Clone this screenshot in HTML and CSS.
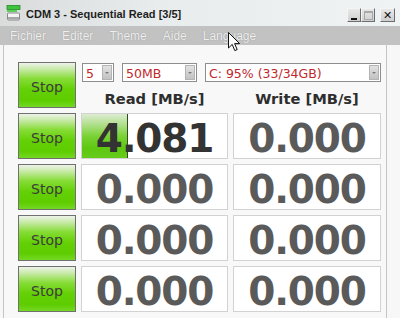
FILE: index.html
```html
<!DOCTYPE html>
<html>
<head>
<meta charset="utf-8">
<link rel="stylesheet" href="styles.css">
</head>
<body>
<div class="window">
  <div class="titlebar">
    <svg class="app-icon" width="16" height="16" viewBox="0 0 16 16">
      <rect x="1" y="0.5" width="13" height="4" fill="#3fc43f" stroke="#2a8a2a" stroke-width="0.8"/>
      <rect x="1" y="5" width="10" height="2" fill="#5ad05a"/>
      <rect x="1.5" y="8" width="12" height="7" rx="1" fill="#f4f4f4" stroke="#8a8a8a"/>
      <rect x="2" y="12" width="11" height="2.5" fill="#a8a8a8"/>
    </svg>
    <span class="title">CDM 3 - Sequential Read [3/5]</span>
    <div class="controls">
      <span class="ctl ctl-min"><i class="min-glyph"></i></span>
      <span class="ctl ctl-max"><i class="max-glyph"></i></span>
      <span class="ctl ctl-close">✕</span>
    </div>
  </div>
  <div class="menubar">
    <span class="menu-item">Fichier</span>
    <span class="menu-item">Editer</span>
    <span class="menu-item">Theme</span>
    <span class="menu-item">Aide</span>
    <span class="menu-item">Language</span>
  </div>
  <div class="content">
    <div class="grid">
      <div class="stop">Stop</div>
      <div class="top-area">
        <div class="selects">
          <div class="select sel-count"><span class="sel-text">5</span><i class="sel-arrow"></i></div>
          <div class="select sel-size"><span class="sel-text">50MB</span><i class="sel-arrow"></i></div>
          <div class="select sel-drive"><span class="sel-text">C: 95% (33/34GB)</span><i class="sel-arrow"></i></div>
        </div>
        <div class="headers">
          <div class="head">Read [MB/s]</div>
          <div class="head">Write [MB/s]</div>
        </div>
      </div>

      <div class="stop">Stop</div>
      <div class="cell"><div class="bar" style="width:46px"></div><span class="val val-dark">4.081</span></div>
      <div class="cell"><span class="val">0.000</span></div>

      <div class="stop">Stop</div>
      <div class="cell"><span class="val">0.000</span></div>
      <div class="cell"><span class="val">0.000</span></div>

      <div class="stop">Stop</div>
      <div class="cell"><span class="val">0.000</span></div>
      <div class="cell"><span class="val">0.000</span></div>

      <div class="stop">Stop</div>
      <div class="cell"><span class="val">0.000</span></div>
      <div class="cell"><span class="val">0.000</span></div>
    </div>
  </div>
  <svg class="cursor" width="13" height="21" viewBox="0 0 13 21">
    <path d="M0.5 0.5 L0.5 16 L4.2 12.4 L6.8 18.6 L9.2 17.6 L6.6 11.6 L11.6 11.6 Z" fill="#ffffff" stroke="#111111" stroke-width="1" stroke-linejoin="miter"/>
  </svg>
</div>
</body>
</html>
```

FILE: styles.css
```css
html, body {
  margin: 0;
  padding: 0;
}
body {
  width: 400px;
  height: 318px;
  overflow: hidden;
  font-family: "DejaVu Sans", sans-serif;
  background: #f6f6f6;
}
.window {
  position: relative;
  width: 400px;
  height: 318px;
  background: #f7f7f7;
}
.titlebar {
  height: 26px;
  box-sizing: border-box;
  display: flex;
  align-items: center;
  padding-left: 6px;
  background: linear-gradient(to right, #dadcdc 0%, #e8ecec 40%, #f0f3f3 100%);
}
.app-icon {
  display: block;
  margin-right: 4px;
}
.title {
  font: bold 11px "Liberation Sans", sans-serif;
  color: #1e1e1e;
  padding-top: 1px;
}
.controls {
  margin-left: auto;
  display: flex;
  align-items: center;
  padding-right: 5px;
  padding-top: 4px;
}
.ctl {
  box-sizing: border-box;
  width: 14px;
  height: 14px;
  background: linear-gradient(#e8e8e8, #cfcfcf);
  border: 1px solid;
  border-color: #f4f4f4 #6e6e6e #6e6e6e #f4f4f4;
  display: flex;
  align-items: center;
  justify-content: center;
}
.ctl-max {
  margin-right: 5px;
}
.ctl-close {
  width: 15px;
  font: bold 11px "DejaVu Sans", sans-serif;
  color: #111;
  line-height: 1;
}
.min-glyph {
  display: block;
  width: 6px;
  height: 2px;
  background: #111;
  margin-top: 7px;
}
.max-glyph {
  display: block;
  width: 7px;
  height: 6px;
  border: 1px solid #a8a8a8;
  border-top-width: 2px;
}
.menubar {
  height: 19px;
  box-sizing: border-box;
  display: flex;
  align-items: center;
  padding-left: 2px;
  background: #c2c2c2;
}
.menu-item {
  padding: 0 8px;
  font: 12px "Liberation Sans", sans-serif;
  color: #efefef;
  text-shadow: 0 0 1px #8a8a8a;
}
.content {
  margin-left: 3px;
  width: 384px;
  height: 273px;
  box-sizing: border-box;
  border-left: 1px solid #c4c4c4;
  border-right: 1px solid #c4c4c4;
  background: #f8f8f8;
  padding: 17px 0 0 14px;
}
.grid {
  display: grid;
  grid-template-columns: 58px 147px 148px;
  grid-template-rows: repeat(5, 46px);
  column-gap: 5px;
  row-gap: 5px;
}
.stop {
  box-sizing: border-box;
  border: 1px solid #707070;
  background: linear-gradient(#eef3ea 0%, #c8eaa8 14%, #86dc36 36%, #64d006 60%, #5ecd00 85%, #74d824 100%);
  display: flex;
  align-items: center;
  justify-content: center;
  font: 14px "DejaVu Sans", sans-serif;
  color: #3c3c3c;
  padding-top: 4px;
}
.top-area {
  grid-column: 2 / 4;
  display: flex;
  flex-direction: column;
}
.selects {
  display: flex;
  gap: 8px;
  margin-left: 1px;
  margin-top: 1px;
}
.select {
  box-sizing: border-box;
  height: 19px;
  border: 1px solid #8e8e8e;
  background: #fff;
  display: flex;
  align-items: center;
  padding-left: 3px;
}
.sel-count { width: 32px; }
.sel-size { width: 75px; }
.sel-drive { width: 176px; }
.sel-text {
  font: 12.5px "DejaVu Sans", sans-serif;
  color: #c0282c;
  flex: 1;
  white-space: nowrap;
  padding-top: 1px;
}
.sel-arrow {
  box-sizing: border-box;
  width: 10px;
  height: 15px;
  margin-right: 1px;
  background: linear-gradient(#e2e2e2, #c2c2c2);
  border: 1px solid #b4b4b4;
  display: flex;
  align-items: center;
  justify-content: center;
}
.sel-arrow::after {
  content: "";
  width: 0;
  height: 0;
  border-left: 2px solid transparent;
  border-right: 2px solid transparent;
  border-top: 2px solid #7a7a7a;
}
.headers {
  display: grid;
  grid-template-columns: 147px 148px;
  column-gap: 5px;
  margin-top: 8px;
}
.head {
  text-align: center;
  font: bold 14.7px "DejaVu Sans", sans-serif;
  line-height: 17px;
  color: #2e2e2e;
  white-space: nowrap;
}
.cell {
  position: relative;
  box-sizing: border-box;
  border: 1px solid #d2d2d2;
  background: #ffffff;
  display: flex;
  align-items: flex-start;
  justify-content: center;
}
.bar {
  position: absolute;
  left: 0;
  top: 0;
  bottom: 0;
  box-sizing: border-box;
  border-right: 1px solid #2f4a24;
  background: linear-gradient(#dcecd2 0%, #b4e092 22%, #7ad234 50%, #5ec710 78%, #66cc1c 100%);
}
.val {
  position: relative;
  font: bold 39px "DejaVu Sans", sans-serif;
  line-height: 38px;
  letter-spacing: -1.2px;
  color: #5a5a5a;
  padding-top: 6px;
}
.val-dark {
  color: #333333;
}
.cursor {
  position: absolute;
  left: 228px;
  top: 32px;
}
```
